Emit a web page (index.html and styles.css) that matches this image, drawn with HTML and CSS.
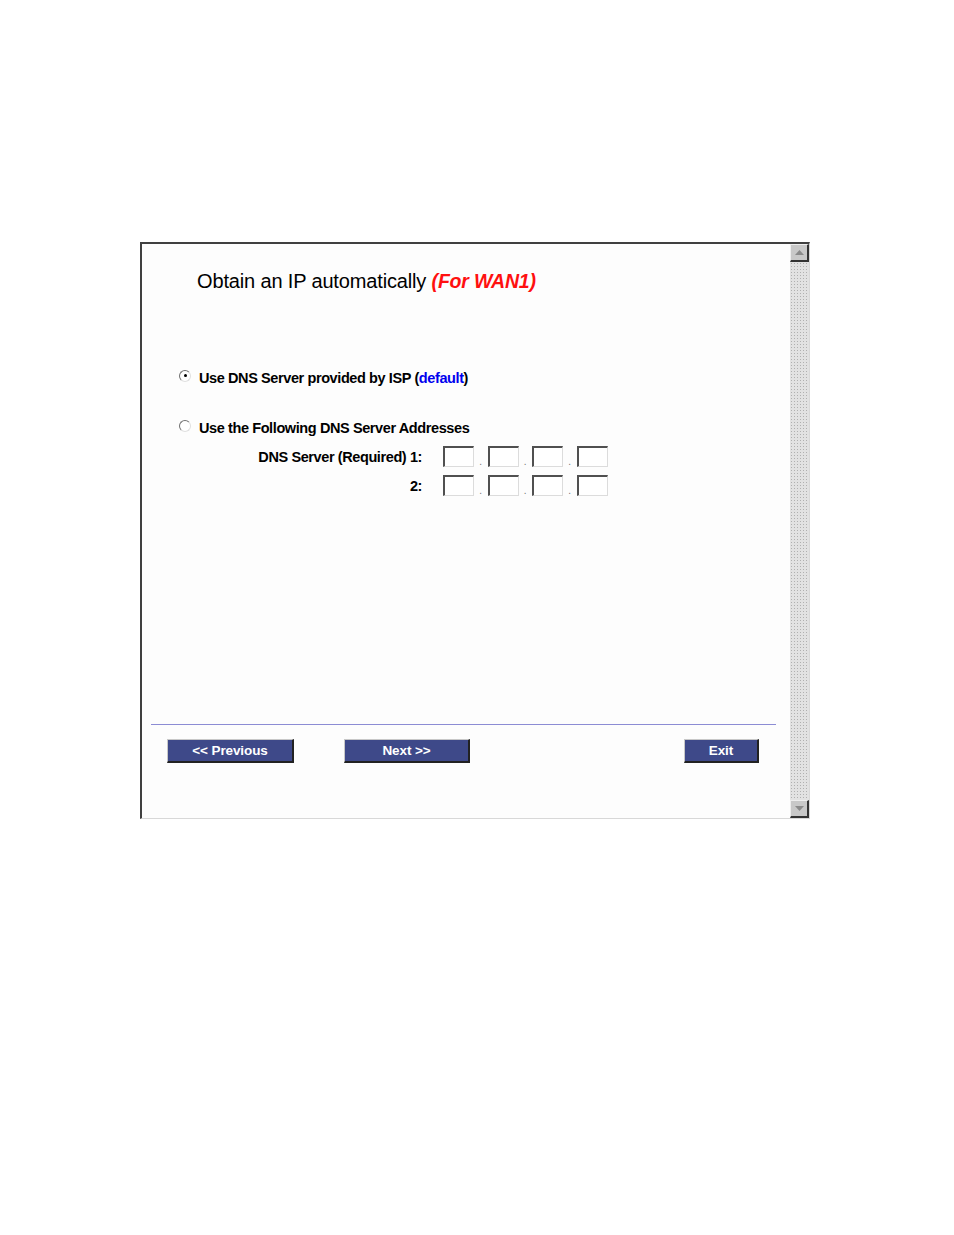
FILE: index.html
```html
<!DOCTYPE html>
<html>
<head>
<meta charset="utf-8">
<link rel="stylesheet" href="styles.css">
</head>
<body>
<div class="frame">
  <div class="main">
    <h1 class="title">Obtain an IP automatically <span class="wan">(For WAN1)</span></h1>
    <div class="opt opt1"><span class="radio checked"></span><span>Use DNS Server provided by ISP (<span class="def">default</span>)</span></div>
    <div class="opt opt2"><span class="radio"></span><span>Use the Following DNS Server Addresses</span></div>
    <div class="dns">
      <div class="lbl">DNS Server (Required) 1:</div>
      <div class="ip"><span class="box"></span><span class="dot">.</span><span class="box"></span><span class="dot">.</span><span class="box"></span><span class="dot">.</span><span class="box"></span></div>
      <div class="lbl">2:</div>
      <div class="ip"><span class="box"></span><span class="dot">.</span><span class="box"></span><span class="dot">.</span><span class="box"></span><span class="dot">.</span><span class="box"></span></div>
    </div>
    <div class="spacer"></div>
    <div class="rule"></div>
    <div class="buttons">
      <span class="btn prev">&lt;&lt; Previous</span>
      <span class="btn next">Next &gt;&gt;</span>
      <span class="btn exit">Exit</span>
    </div>
  </div>
  <div class="scroll">
    <div class="arrow up"><svg width="9" height="5" viewBox="0 0 9 5"><path d="M0 5 L4.5 0 L9 5 Z" fill="#8a8a8a"/></svg></div>
    <div class="track"></div>
    <div class="arrow down"><svg width="9" height="5" viewBox="0 0 9 5"><path d="M0 0 L4.5 5 L9 0 Z" fill="#8a8a8a"/></svg></div>
  </div>
</div>
</body>
</html>
```
FILE: styles.css
```css
html, body { margin: 0; padding: 0; background: #ffffff; }
body { font-family: "Liberation Sans", Arial, sans-serif; color: #000; }

.frame {
  margin: 242px 0 0 140px;
  width: 670px;
  height: 577px;
  box-sizing: border-box;
  border-top: 2px solid #404040;
  border-left: 2px solid #404040;
  border-right: 1px solid #d8d8d8;
  border-bottom: 1px solid #d8d8d8;
  background: #fdfdfd;
  display: flex;
}

.main {
  flex: 1;
  display: flex;
  flex-direction: column;
  padding: 0 14px 0 9px;
}

.title {
  margin: 25px 0 0 46px;
  font-size: 20px;
  font-weight: normal;
  letter-spacing: -0.15px;
  line-height: 24px;
}
.wan { color: #ff1010; font-style: italic; font-weight: bold; font-size: 19.5px; letter-spacing: -0.2px; }

.opt {
  display: flex;
  align-items: center;
  gap: 8px;
  font-size: 14.5px;
  font-weight: bold;
  letter-spacing: -0.4px;
  margin-left: 28px;
  line-height: 16px;
}
.opt1 { margin-top: 77px; }
.opt2 { margin-top: 34px; }
.def { color: #0000ee; }

.radio {
  width: 12px;
  height: 12px;
  border-radius: 50%;
  box-sizing: border-box;
  border: 1px solid;
  border-color: #707070 #e0e0e0 #e0e0e0 #707070;
  background: #fff;
  position: relative;
  margin-top: -5px;
}
.radio.checked::after {
  content: "";
  position: absolute;
  left: 3.5px;
  top: 3.5px;
  width: 3px;
  height: 3px;
  border-radius: 50%;
  background: #000;
}

.dns {
  display: grid;
  grid-template-columns: 271px auto;
  column-gap: 21px;
  row-gap: 8px;
  margin-top: 10px;
  align-items: center;
}
.lbl {
  text-align: right;
  font-size: 14.5px;
  font-weight: bold;
  letter-spacing: -0.4px;
}
.ip { display: flex; align-items: flex-end; }
.box {
  width: 31px;
  height: 21px;
  box-sizing: border-box;
  border-top: 2px solid #505050;
  border-left: 2px solid #505050;
  border-right: 1px solid #dcdcdc;
  border-bottom: 1px solid #dcdcdc;
  background: #fff;
}
.dot { width: 13.5px; text-align: center; font-size: 10px; color: #777; line-height: 10px; }

.spacer { flex: 1; }

.rule { height: 1px; background: #8c8cd4; margin: 0 0 14px 0; }

.buttons {
  display: flex;
  margin: 0 0 55px 16px;
}
.btn {
  height: 24px;
  box-sizing: border-box;
  background: #3e4989;
  color: #fff;
  font-size: 13.5px;
  font-weight: bold;
  letter-spacing: -0.1px;
  display: flex;
  align-items: center;
  justify-content: center;
  border-top: 1px solid #c8c8c8;
  border-left: 1px solid #c8c8c8;
  border-right: 2px solid #222;
  border-bottom: 2px solid #222;
}
.prev { width: 127px; }
.next { width: 126px; margin-left: 50px; }
.exit { width: 75px; margin-left: 214px; }

.scroll {
  width: 19px;
  display: flex;
  flex-direction: column;
}
.arrow {
  height: 18px;
  box-sizing: border-box;
  background: #c8c8c8;
  border-top: 1px solid #eee;
  border-left: 1px solid #eee;
  border-right: 2px solid #333;
  border-bottom: 2px solid #333;
  display: flex;
  align-items: center;
  justify-content: center;
}
.track {
  flex: 1;
  background-color: #e2e2e2;
  background-image: radial-gradient(circle, #b0b0b0 0.8px, transparent 1px);
  background-size: 3px 3px;
}
```
